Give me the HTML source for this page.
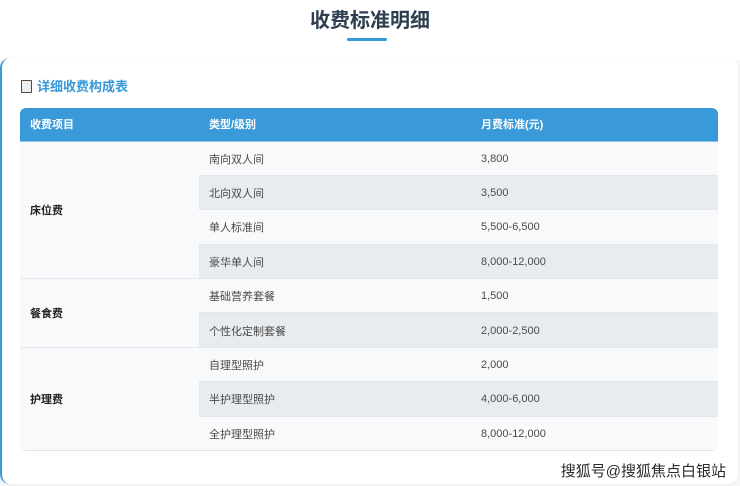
<!DOCTYPE html>
<html><head><meta charset="utf-8"><style>
*{margin:0;padding:0;box-sizing:border-box}
body{width:740px;height:486px;background:#f6f8fa;font-family:"Liberation Sans","Noto Sans CJK SC",sans-serif;position:relative;overflow:hidden}
.top{position:absolute;left:0;top:0;width:740px;height:60px;background:#fff}
h1{position:absolute;top:8px;width:740px;text-align:center;font-size:20px;color:#2c3e50;font-weight:bold;line-height:26px}
.ul{position:absolute;left:347px;top:38px;width:40px;height:3px;background:#3498db;border-radius:2px}
.card{position:absolute;left:0;top:58px;width:738px;height:426px;background:#fff;border-radius:10px;border-left:2px solid #3a9ad9;box-shadow:0 1px 4px rgba(0,0,0,.06)}
.sec{position:absolute;left:21px;top:79px;font-size:13px;font-weight:bold;color:#3498db;line-height:16px}
.icon{display:inline-block;width:11px;height:13px;border:1.5px solid #5a4632;border-radius:1px;background:#eee;vertical-align:-2px;margin-right:5px;position:relative}
table{position:absolute;left:20px;top:108px;width:698px;border-collapse:collapse;border-radius:6px;overflow:hidden;font-size:11px;color:#4a4a4a}
th{background:#3a9ad9;color:#fff;text-align:left;height:33px;font-weight:bold;padding-left:10px;border-bottom:1px solid #8cc3ea}
td{height:34.4px;padding-left:10px;padding-top:1px;background:#f8f9fa;border-bottom:1px solid #e3e6ea}
td.c{font-weight:bold;color:#222;background:#f8f9fa}
tr.g td{background:#e9ecef}
tr.g td.c{background:#f8f9fa}
.wm{position:absolute;right:14px;top:460px;font-size:15px;color:#2a2a2a;text-shadow:0 0 2px #fff}
</style></head><body>
<div class="top"></div>
<h1>收费标准明细</h1><div class="ul"></div>
<div class="card"></div>
<div class="sec"><span class="icon"></span>详细收费构成表</div>
<table>
<tr><th style="width:179px">收费项目</th><th style="width:272px">类型/级别</th><th>月费标准(元)</th></tr>
<tr><td class="c" rowspan="4">床位费</td><td>南向双人间</td><td>3,800</td></tr>
<tr class="g"><td>北向双人间</td><td>3,500</td></tr>
<tr><td>单人标准间</td><td>5,500-6,500</td></tr>
<tr class="g"><td>豪华单人间</td><td>8,000-12,000</td></tr>
<tr><td class="c" rowspan="2">餐食费</td><td>基础营养套餐</td><td>1,500</td></tr>
<tr class="g"><td>个性化定制套餐</td><td>2,000-2,500</td></tr>
<tr><td class="c" rowspan="3">护理费</td><td>自理型照护</td><td>2,000</td></tr>
<tr class="g"><td>半护理型照护</td><td>4,000-6,000</td></tr>
<tr><td>全护理型照护</td><td>8,000-12,000</td></tr>
</table>
<div class="wm">搜狐号@搜狐焦点白银站</div>
</body></html>
